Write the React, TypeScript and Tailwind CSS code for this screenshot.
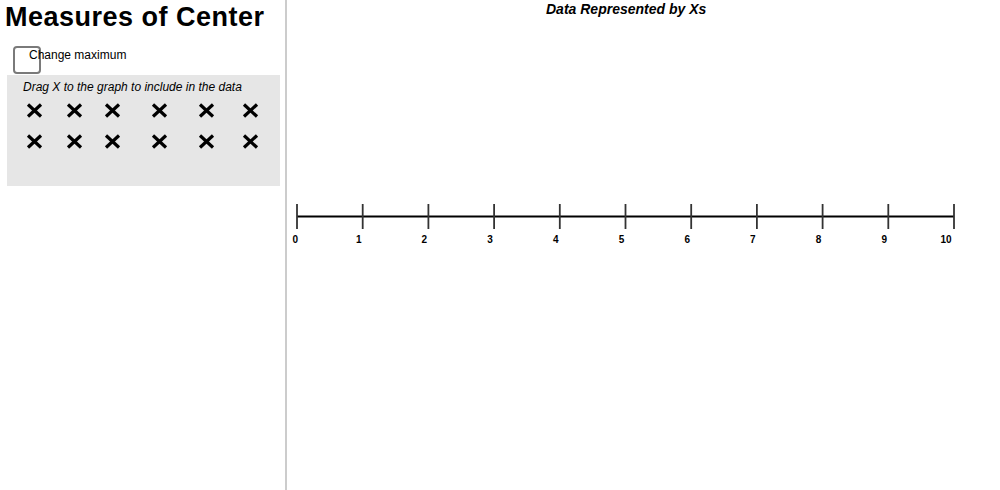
import React from "react";

const XMark = ({ className }: { className: string }) => (
  <svg width="17" height="15" viewBox="0 0 17 15" className={className}>
    <line x1="2" y1="1.5" x2="15" y2="13.5" stroke="#000" strokeWidth="3.2" />
    <line x1="15" y1="1.5" x2="2" y2="13.5" stroke="#000" strokeWidth="3.2" />
  </svg>
);

const XRow = ({ className }: { className: string }) => (
  <div className={"flex " + className}>
    <XMark className="ml-[19px] shrink-0" />
    <XMark className="ml-[23px] shrink-0" />
    <XMark className="ml-[21px] shrink-0" />
    <XMark className="ml-[30px] shrink-0" />
    <XMark className="ml-[30px] shrink-0" />
    <XMark className="ml-[27px] shrink-0" />
  </div>
);

const ticks = Array.from({ length: 11 }, (_, i) => 10 + i * 65.7);

export default function App() {
  return (
    <div
      className="flex w-[1000px] h-[490px] bg-white overflow-hidden"
      style={{ fontFamily: '"Liberation Sans", Arial, sans-serif' }}
    >
      <div className="w-[285px] shrink-0 h-full">
        <h1 className="ml-[5px] mt-[4px] text-[27px] leading-[26px] font-bold text-black tracking-[0.5px] whitespace-nowrap">
          Measures of Center
        </h1>
        <div className="flex items-start mt-[16px] ml-[13px]">
          <div className="w-[28px] h-[28px] border-2 border-[#7a7a7a] rounded-[4px] bg-white shrink-0" />
          <span className="-ml-[12px] mt-[2px] text-[12px] leading-[14px] text-black whitespace-nowrap">
            Change maximum
          </span>
        </div>
        <div className="ml-[7px] mt-[1px] w-[273px] h-[111px] bg-[#e6e6e6] pt-[5px]">
          <div className="ml-[16px] text-[12px] leading-[14px] italic text-black whitespace-nowrap">
            Drag X to the graph to include in the data
          </div>
          <XRow className="mt-[9px]" />
          <XRow className="mt-[16px]" />
        </div>
      </div>
      <div className="w-[2px] h-full bg-[#cccccc] shrink-0" />
      <div className="flex-1 h-full">
        <div className="ml-[259px] mt-[1px] text-[14px] leading-[16px] font-bold italic text-black whitespace-nowrap">
          Data Represented by Xs
        </div>
        <svg width="713" height="60" className="mt-[183px] block">
          <line x1={ticks[0]} y1="16.5" x2={ticks[10]} y2="16.5" stroke="#000" strokeWidth="2" />
          {ticks.map((x, i) => (
            <g key={i}>
              <line x1={x} y1="4" x2={x} y2="29" stroke="#333" strokeWidth="1.8" />
              <text
                x={i === 0 ? x - 1.7 : i === 10 ? x - 8 : x - 4}
                y="43"
                textAnchor="middle"
                fontSize="10"
                fontWeight="bold"
                fill="#000"
                fontFamily='"Liberation Sans", Arial, sans-serif'
              >
                {i}
              </text>
            </g>
          ))}
        </svg>
      </div>
    </div>
  );
}
